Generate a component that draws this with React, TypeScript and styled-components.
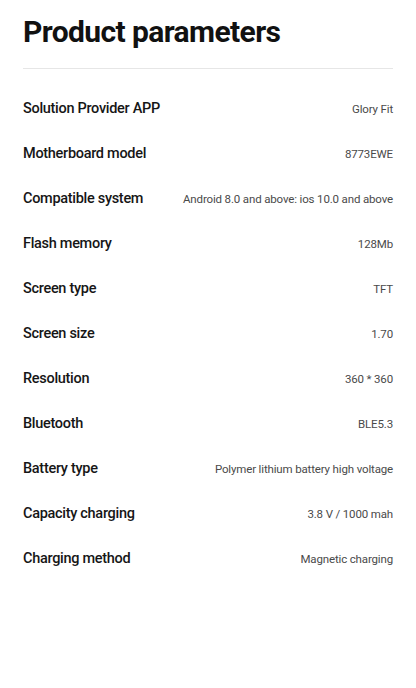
import React from "react";
import styled, { createGlobalStyle } from "styled-components";

const GlobalStyle = createGlobalStyle`
    html, body {
        margin: 0;
        padding: 0;
        background: #fff;
    }
    body {
        font-family: Roboto, "Noto Sans", sans-serif;
        color: #111;
    }
`;

const Page = styled.div`
    padding: 0 23px;
`;

const Title = styled.h1`
    margin: 0;
    padding: 14px 0 18px;
    font-size: 30px;
    line-height: 36px;
    font-weight: 700;
    letter-spacing: -0.6px;
    color: #111;
    border-bottom: 1px solid #e6e6e6;
`;

const List = styled.div`
    padding-top: 17px;
`;

const Row = styled.div`
    display: flex;
    align-items: center;
    justify-content: space-between;
    height: 45px;
`;

const Label = styled.span`
    font-size: 14.5px;
    font-weight: 500;
    letter-spacing: -0.3px;
    color: #161616;
`;

const Value = styled.span`
    font-size: 11.5px;
    letter-spacing: -0.15px;
    color: #4a4a4a;
    text-align: right;
`;

const params: [string, string][] = [
    ["Solution Provider APP", "Glory Fit"],
    ["Motherboard model", "8773EWE"],
    ["Compatible system", "Android 8.0 and above: ios 10.0 and above"],
    ["Flash memory", "128Mb"],
    ["Screen type", "TFT"],
    ["Screen size", "1.70"],
    ["Resolution", "360 * 360"],
    ["Bluetooth", "BLE5.3"],
    ["Battery type", "Polymer lithium battery high voltage"],
    ["Capacity charging", "3.8 V / 1000 mah"],
    ["Charging method", "Magnetic charging"],
];

export default function App() {
    return (
        <>
            <GlobalStyle />
            <Page>
                <Title>Product parameters</Title>
                <List>
                    {params.map(([label, value]) => (
                        <Row key={label}>
                            <Label>{label}</Label>
                            <Value>{value}</Value>
                        </Row>
                    ))}
                </List>
            </Page>
        </>
    );
}
